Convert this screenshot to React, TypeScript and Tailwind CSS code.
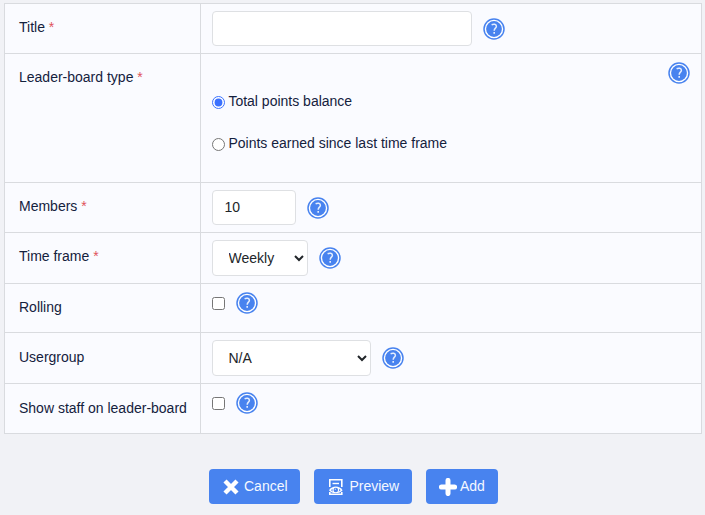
import type { ReactNode } from "react";

function Help() {
  return (
    <svg className="size-[22px] shrink-0" viewBox="0 0 22 22" role="img" aria-label="Help">
      <circle cx="11" cy="11" r="10" fill="#fff" stroke="#4883ef" strokeWidth="1.5" />
      <circle cx="11" cy="11" r="7.9" fill="#4883ef" />
      <path d="M8.6 6.7C10.7 5.7 13.4 6 13.4 8.2C13.4 10.1 11.2 10.2 11.2 12.7" fill="none" stroke="#e4edfd" strokeWidth="1.5" />
      <path d="M10.4 14h1.6v1.7h-1.6z" fill="#e4edfd" />
    </svg>
  );
}

type RowProps = { label: string; required?: boolean; height: string; pad?: string; children: ReactNode };

function Row({ label, required, height, pad = "pt-[13px]", children }: RowProps) {
  return (
    <div className={`flex border-b border-[#d9dbdf] ${height}`}>
      <div className={`w-[196px] shrink-0 border-r border-[#d9dbdf] pl-[14px] leading-[21px] whitespace-nowrap ${pad}`}>
        {label}
        {required && <span className="text-[#e0525c]"> *</span>}
      </div>
      <div className="flex grow items-start pl-[11px]">{children}</div>
    </div>
  );
}

const field = "rounded border border-[#dee0e3] bg-white px-[11.5px] text-[14px] text-[#212529] outline-none";
const button = "flex h-[35px] items-center rounded-[4px] bg-[#4883ef] text-[14px] text-[#f4f8ff]";

export default function App() {
  return (
    <main className="min-h-[515px] bg-[#f1f2f6] px-1 pt-[3px] font-['Liberation_Sans',Arial,sans-serif] text-[14px] text-[#14213d]">
      <div className="w-[698px] border-t border-r border-l border-[#d9dbdf] bg-[#fafbff]">
        <Row label="Title" required height="h-[50px]">
          <div className="flex items-center gap-[11px] pt-[7px]">
            <input aria-label="Title" className={`h-[35px] w-[260px] ${field}`} />
            <Help />
          </div>
        </Row>
        <Row label="Leader-board type" required height="h-[129px]">
          <div className="flex grow flex-col gap-[21px] pt-[37px]">
            <label className="flex h-[21px] items-center gap-[3.4px]">
              <input type="radio" name="type" defaultChecked className="mt-px size-[13px] accent-[#3b71fe]" />
              Total points balance
            </label>
            <label className="flex h-[21px] items-center gap-[3.4px]">
              <input type="radio" name="type" className="mt-px size-[13px]" />
              Points earned since last time frame
            </label>
          </div>
          <div className="pt-2 pr-[11px]">
            <Help />
          </div>
        </Row>
        <Row label="Members" required height="h-[50px]">
          <div className="flex items-center gap-[11px] pt-[7px]">
            <input aria-label="Members" defaultValue="10" className={`h-[35px] w-[84px] pb-[2px] ${field}`} />
            <Help />
          </div>
        </Row>
        <Row label="Time frame" required height="h-[51px]">
          <div className="flex items-center gap-[11px] pt-[7px]">
            <select aria-label="Time frame" className={`h-[36px] w-[96px] ${field} pr-0`}>
              <option>Weekly</option>
            </select>
            <Help />
          </div>
        </Row>
        <Row label="Rolling" height="h-[49px]">
          <div className="flex items-center gap-[11px] pt-2">
            <input aria-label="Rolling" type="checkbox" className="size-[13px]" />
            <Help />
          </div>
        </Row>
        <Row label="Usergroup" height="h-[51px]" pad="pt-[14px]">
          <div className="flex items-center gap-[11px] pt-[7px]">
            <select aria-label="Usergroup" className={`h-[36px] w-[159px] ${field} pr-0`}>
              <option>N/A</option>
            </select>
            <Help />
          </div>
        </Row>
        <Row label="Show staff on leader-board" height="h-[50px]" pad="pt-[14px]">
          <div className="flex items-center gap-[11px] pt-2">
            <input aria-label="Show staff on leader-board" type="checkbox" className="size-[13px]" />
            <Help />
          </div>
        </Row>
      </div>
      <div className="mt-[35px] flex gap-[14px] pl-[205px]">
        <button className={`w-[91px] ${button} pl-[13px]`}>
          <svg className="mt-[1px] mr-1 size-[18px]" viewBox="0 0 18 18">
            <path d="M3 3L15 15M15 3L3 15" stroke="#fff" strokeWidth="4.4" />
          </svg>
          Cancel
        </button>
        <button className={`w-[98px] ${button} pl-[13px]`}>
          <svg className="mt-[1px] mr-[4.4px] size-[18px]" viewBox="0 0 18 18" fill="none" stroke="#fff">
            <path d="M2.8 9V1.8h12V9M2.8 14v2.3h12V14" strokeWidth="1.6" />
            <path d="M5.5 5.5h6.5" strokeWidth="1.4" />
            <path d="M2 12.2C5 7.2 12.6 7.2 15.6 12.2C12.6 16 5 16 2 12.2Z" fill="#fff" stroke="none" />
            <circle cx="8.8" cy="12" r="2.3" fill="#4883ef" stroke="none" />
            <path d="M4 12.3C4.6 11.4 5.2 11 5.6 10.8C5.3 12 5.5 13 6 13.7M13.6 12.3C13 11.4 12.4 11 12 10.8C12.3 12 12.1 13 11.6 13.7" fill="#4883ef" stroke="none" />
            <path d="M7.8 11.2h1" strokeWidth="1" />
          </svg>
          Preview
        </button>
        <button className={`w-[72px] ${button} pl-[13px]`}>
          <svg className="mt-[1px] mr-[3px] size-[18px]" viewBox="0 0 18 18">
            <path d="M9 2.4V15.6M2.4 9H15.6" stroke="#fff" strokeWidth="5" strokeLinecap="round" />
          </svg>
          Add
        </button>
      </div>
    </main>
  );
}
